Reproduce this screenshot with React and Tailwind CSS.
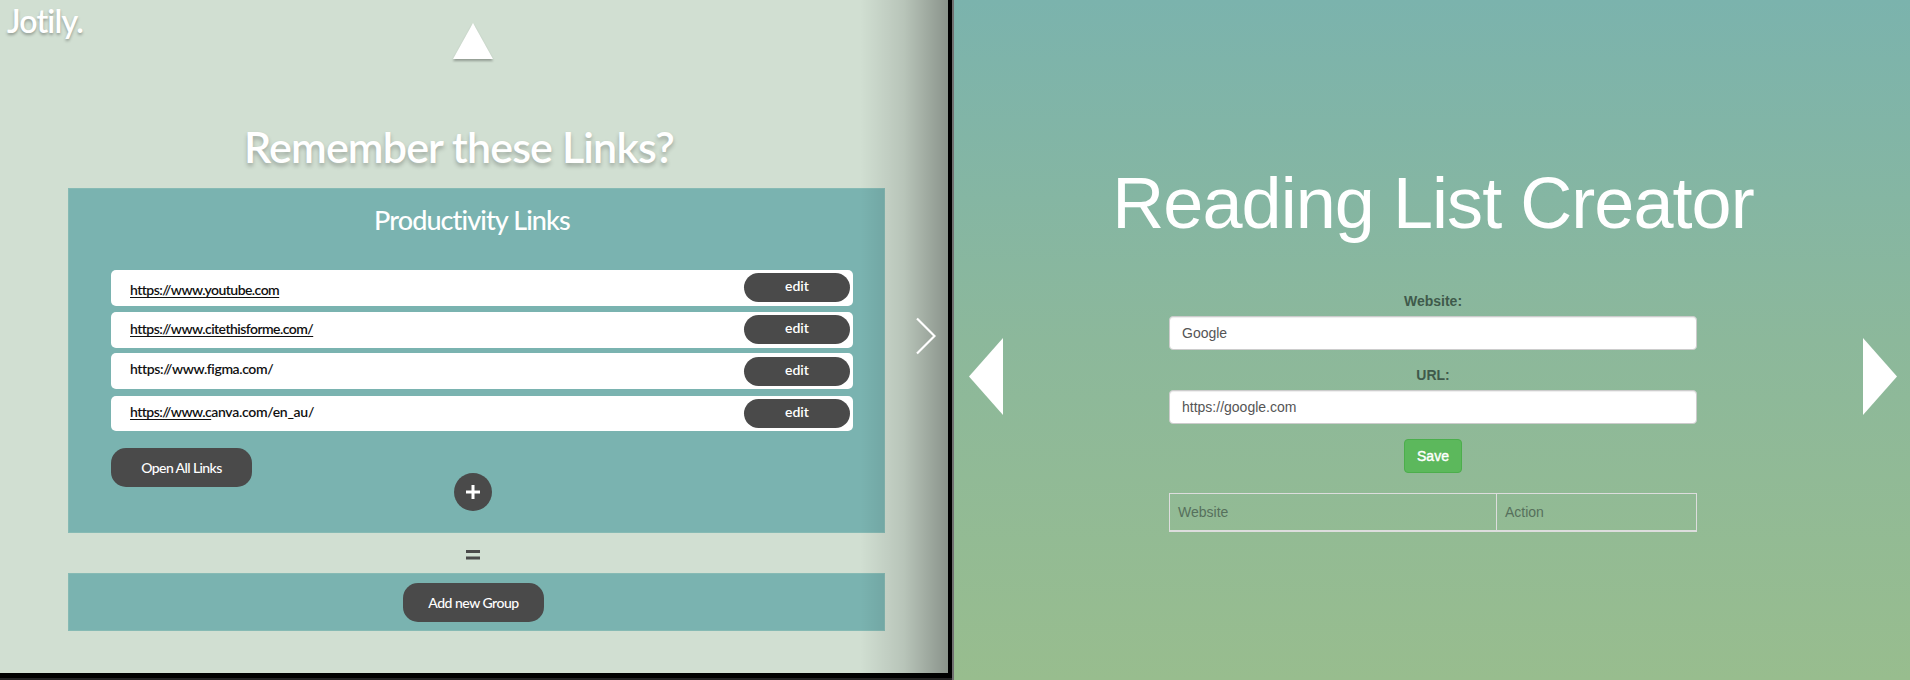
const links = [
  { lead: "https://www.youtube.com", rest: "", row: "mt-[34px] h-[36px]", text: "pt-[10px] tracking-[-0.58px]", edit: "mt-[3px]" },
  { lead: "https://www.citethisforme.com/", rest: "", row: "mt-[6px] h-[36px]", text: "pt-[7px] tracking-[-0.52px]", edit: "mt-[3px]" },
  { lead: "", rest: "https://www.figma.com/", row: "mt-[5px] h-[36px]", text: "pt-[6px] tracking-[-0.4px]", edit: "mt-[4px]" },
  { lead: "https://www.c", rest: "anva.com/en_au/", row: "mt-[7px] h-[35px]", text: "pt-[6px] tracking-[-0.3px]", edit: "mt-[3px]" },
];

function LinkRow({ link }) {
  return (
    <div className={"flex justify-between rounded-[5px] bg-white pl-[19px] pr-[3px] " + link.row}>
      <div className={"text-[14px] font-semibold leading-[20px] text-[#111] " + link.text}>
        <span className="tracking-[-0.55px] underline decoration-1 underline-offset-2">{link.lead}</span>
        <span>{link.rest}</span>
      </div>
      <button className={"h-[29px] w-[106px] rounded-[15px] bg-[#4a4a4a] pb-[3px] text-[14px] font-semibold leading-[20px] text-white " + link.edit}>
        edit
      </button>
    </div>
  );
}

function LinksPanel() {
  return (
    <section className="relative h-[673px] w-[948px] shrink-0 overflow-hidden bg-[#d1dfd2] font-['Lato',sans-serif] text-white [font-variant-ligatures:none]">
      <header className="flex h-[188px] flex-col">
        <div className="flex h-[64px]">
          <div className="w-[453px] pl-[7px] pt-px text-[32px] font-semibold leading-[40px] tracking-[-0.8px] [text-shadow:0_2px_3px_rgba(0,0,0,0.3)]">Jotily.</div>
          <svg className="mt-[23px] h-[41px] w-[40px] overflow-visible drop-shadow-[0_2px_1px_rgba(0,0,0,0.3)]" viewBox="0 0 40 41">
            <path d="M20 0L40 36H0Z" fill="#fff" />
          </svg>
        </div>
        <h1 className="mt-[55px] pl-[244px] text-[43px] font-semibold leading-[56px] tracking-[-0.85px] whitespace-nowrap [text-shadow:0_3px_4px_rgba(0,0,0,0.25)]">Remember these Links?</h1>
      </header>
      <div className="ml-[68px] flex h-[345px] w-[817px] flex-col border border-[#86bab4] bg-[#7ab3b0] pl-[42px] pr-[31px]">
        <h2 className="pl-[263px] pt-[15px] text-[27px] font-medium leading-[32px] tracking-[-0.9px] whitespace-nowrap">Productivity Links</h2>
        {links.map((link, i) => <LinkRow key={i} link={link} />)}
        <div className="mt-[17px] flex">
          <button className="h-[39px] w-[141px] rounded-[15px] bg-[#4a4a4a] text-[14px] font-medium tracking-[-0.6px]">Open All Links</button>
          <button className="ml-[202px] mt-[25px] flex size-[38px] items-center justify-center rounded-full bg-[#4a4a4a]">
            <svg className="size-[14px]" viewBox="0 0 14 14"><path d="M7 0V14M0 7H14" stroke="#fff" strokeWidth="3" /></svg>
          </button>
        </div>
      </div>
      <div className="flex h-[40px] pl-[466px] pt-[17px]">
        <svg className="h-[10px] w-[14px]" viewBox="0 0 14 10"><path d="M0 1.5H14M0 8H14" stroke="#4a4a4a" strokeWidth="2.8" /></svg>
      </div>
      <div className="ml-[68px] h-[58px] w-[817px] border border-[#86bab4] bg-[#7ab3b0] pl-[334px] pt-[9px]">
        <button className="block h-[39px] w-[141px] rounded-[15px] bg-[#4a4a4a] text-[14px] font-medium tracking-[-0.5px]">Add new Group</button>
      </div>
      <div className="absolute inset-y-0 right-0 flex w-[88px] items-center justify-end bg-linear-to-r from-black/0 via-black/12 to-black/34 pr-[12px]">
        <svg className="mb-[2px] h-[38px] w-[20px]" viewBox="0 0 20 38"><path d="M1 1.5L18.5 19L1 36.5" fill="none" stroke="#fff" strokeWidth="2.2" /></svg>
      </div>
    </section>
  );
}

function Field({ label, value }) {
  return (
    <label className="mb-[15px] block">
      <span className="mb-[5px] block text-center text-[14px] font-bold leading-[20px] text-[#3f5a4b]">{label}</span>
      <input className="block h-[34px] w-full rounded-[4px] border border-[#ccc] bg-white px-[12px] text-[14px] text-[#555] shadow-[inset_0_1px_1px_rgba(0,0,0,0.075)]" defaultValue={value} />
    </label>
  );
}

function ReadingList() {
  return (
    <section className="flex flex-1 bg-linear-to-b from-[#7bb3ad] via-[#8cb89b] to-[#98bd8e] font-['Liberation_Sans',Arial,sans-serif]">
      <svg className="ml-[15px] mt-[338px] h-[77px] w-[34px] shrink-0" viewBox="0 0 34 77"><path d="M0 38.5L34 0V77Z" fill="#fff" /></svg>
      <div className="flex flex-1 flex-col items-center pt-[163px]">
        <h1 className="h-[128px] text-[72px] leading-[80px] tracking-[-0.95px] whitespace-nowrap text-white">Reading List Creator</h1>
        <div className="flex w-[528px] flex-col">
          <Field label="Website:" value="Google" />
          <Field label="URL:" value="https://google.com" />
          <button className="h-[34px] w-[58px] self-center rounded-[4px] border border-[#4cae4c] bg-[#5cb85c] text-[14px] text-white [-webkit-text-stroke:0.4px_white]">Save</button>
          <div className="mt-[20px] flex h-[39px] border border-b-2 border-[#ddd] text-[14px] leading-[36px] text-[#56705c]">
            <div className="w-[327px] border-r border-[#ddd] pl-[8px]">Website</div>
            <div className="pl-[8px]">Action</div>
          </div>
        </div>
      </div>
      <svg className="mr-[13px] mt-[338px] h-[77px] w-[34px] shrink-0" viewBox="0 0 34 77"><path d="M34 38.5L0 0V77Z" fill="#fff" /></svg>
    </section>
  );
}

export default function App() {
  return (
    <main className="flex h-[680px] w-[1910px] overflow-hidden bg-black">
      <div className="flex w-[954px] shrink-0 flex-col border-r-2 border-[#707070] bg-black">
        <LinksPanel />
        <div className="mt-[5px] h-[2px] bg-[#232323]" />
      </div>
      <ReadingList />
    </main>
  );
}
